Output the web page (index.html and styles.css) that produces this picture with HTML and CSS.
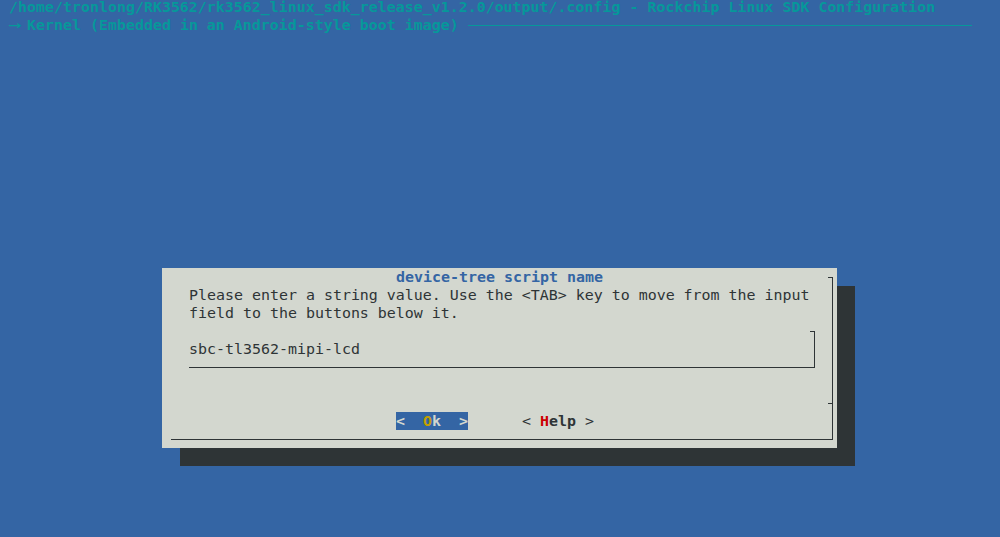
FILE: index.html
```html
<!DOCTYPE html>
<html lang="en">
<head>
    <meta charset="UTF-8">
    <meta name="viewport" content="width=device-width, initial-scale=1.0">
    <title>Rockchip Linux SDK Configuration</title>
    <link rel="stylesheet" href="styles.css">
</head>
<body>
    <div class="screen">
        <!-- Header lines -->
        <div class="title">/home/tronlong/RK3562/rk3562_linux_sdk_release_v1.2.0/output/.config - Rockchip Linux SDK Configuration</div>
        <div class="crumb">
            <span class="arrow">→</span>
            <span class="crumb-text">Kernel (Embedded in an Android-style boot image)</span>
            <span class="rule"></span>
        </div>

        <!-- Input dialog -->
        <div class="dialog">
            <div class="dlg-title">device-tree script name</div>
            <div class="dlg-text">Please enter a string value. Use the &lt;TAB&gt; key to move from the input<br>field to the buttons below it.</div>
            <div class="input-box">sbc-tl3562-mipi-lcd</div>
            <div class="buttons">
                <span class="btn btn-active">&lt;  <span class="hot">O</span>k  &gt;</span>
                <span class="btn"><span class="bracket">&lt;</span> <span class="hot">H</span>elp <span class="bracket">&gt;</span></span>
            </div>
            <div class="frame"></div>
        </div>
    </div>
</body>
</html>
```

FILE: styles.css
```css
:root {
    --term-blue: #3465a4;
    --term-cyan: #06989a;
    --term-gray: #d3d7cf;
    --term-dark: #2e3436;
    --term-yellow: #c4a000;
    --term-red: #cc0000;
}

body {
    margin: 0;
    background-color: var(--term-blue);
    font-family: "DejaVu Sans Mono", "Liberation Mono", monospace;
    font-size: 14.95px;
    line-height: 18px;
    overflow: hidden;
}

.screen {
    width: 1000px;
    height: 537px;
}

.title {
    margin-top: -2px;
    padding-left: 9px;
    height: 18px;
    color: var(--term-cyan);
    font-weight: bold;
    white-space: pre;
}

.crumb {
    display: flex;
    align-items: center;
    height: 18px;
    padding-left: 9px;
    color: var(--term-cyan);
    font-weight: bold;
    white-space: pre;
}

.arrow {
    display: inline-block;
    width: 18px;
    transform: scaleX(1.5);
    transform-origin: 1px 50%;
    font-weight: normal;
}

.rule {
    flex: 1;
    margin: 0 28px 0 9px;
    border-top: 1px solid var(--term-cyan);
}

.dialog {
    position: relative;
    width: 675px;
    height: 180px;
    margin: 234px 0 0 162px;
    background-color: var(--term-gray);
    box-shadow: 18px 18px 0 var(--term-dark);
    color: var(--term-dark);
}

.dlg-title {
    height: 18px;
    text-align: center;
    color: var(--term-blue);
    font-weight: bold;
}

.dlg-text {
    padding-left: 27px;
    white-space: nowrap;
}

.input-box {
    position: relative;
    box-sizing: border-box;
    width: 626px;
    height: 37px;
    margin: 9px 0 0 27px;
    padding-top: 9px;
    border-right: 1px solid var(--term-dark);
    border-bottom: 1px solid var(--term-dark);
    white-space: pre;
}

.input-box::before {
    content: "";
    position: absolute;
    top: 0;
    right: 0;
    width: 4px;
    border-top: 1px solid var(--term-dark);
}

.buttons {
    display: flex;
    gap: 54px;
    height: 18px;
    margin-top: 44px;
    padding-left: 234px;
}

.btn {
    width: 72px;
    font-weight: bold;
    white-space: pre;
}

.btn .bracket {
    font-weight: normal;
}

.btn .hot {
    color: var(--term-red);
}

.btn-active {
    background-color: var(--term-blue);
    color: var(--term-gray);
}

.btn-active .hot {
    color: var(--term-yellow);
}

/* dark half of the 3d dialog border */
.frame {
    position: absolute;
    left: 9px;
    top: 9px;
    box-sizing: border-box;
    width: 662px;
    height: 163px;
    border-right: 1px solid var(--term-dark);
    border-bottom: 1px solid var(--term-dark);
    pointer-events: none;
}

.frame::before,
.frame::after {
    content: "";
    position: absolute;
    right: 0;
    width: 4px;
    border-top: 1px solid var(--term-dark);
}

.frame::before {
    top: 0;
}

.frame::after {
    top: 126px;
}
```
